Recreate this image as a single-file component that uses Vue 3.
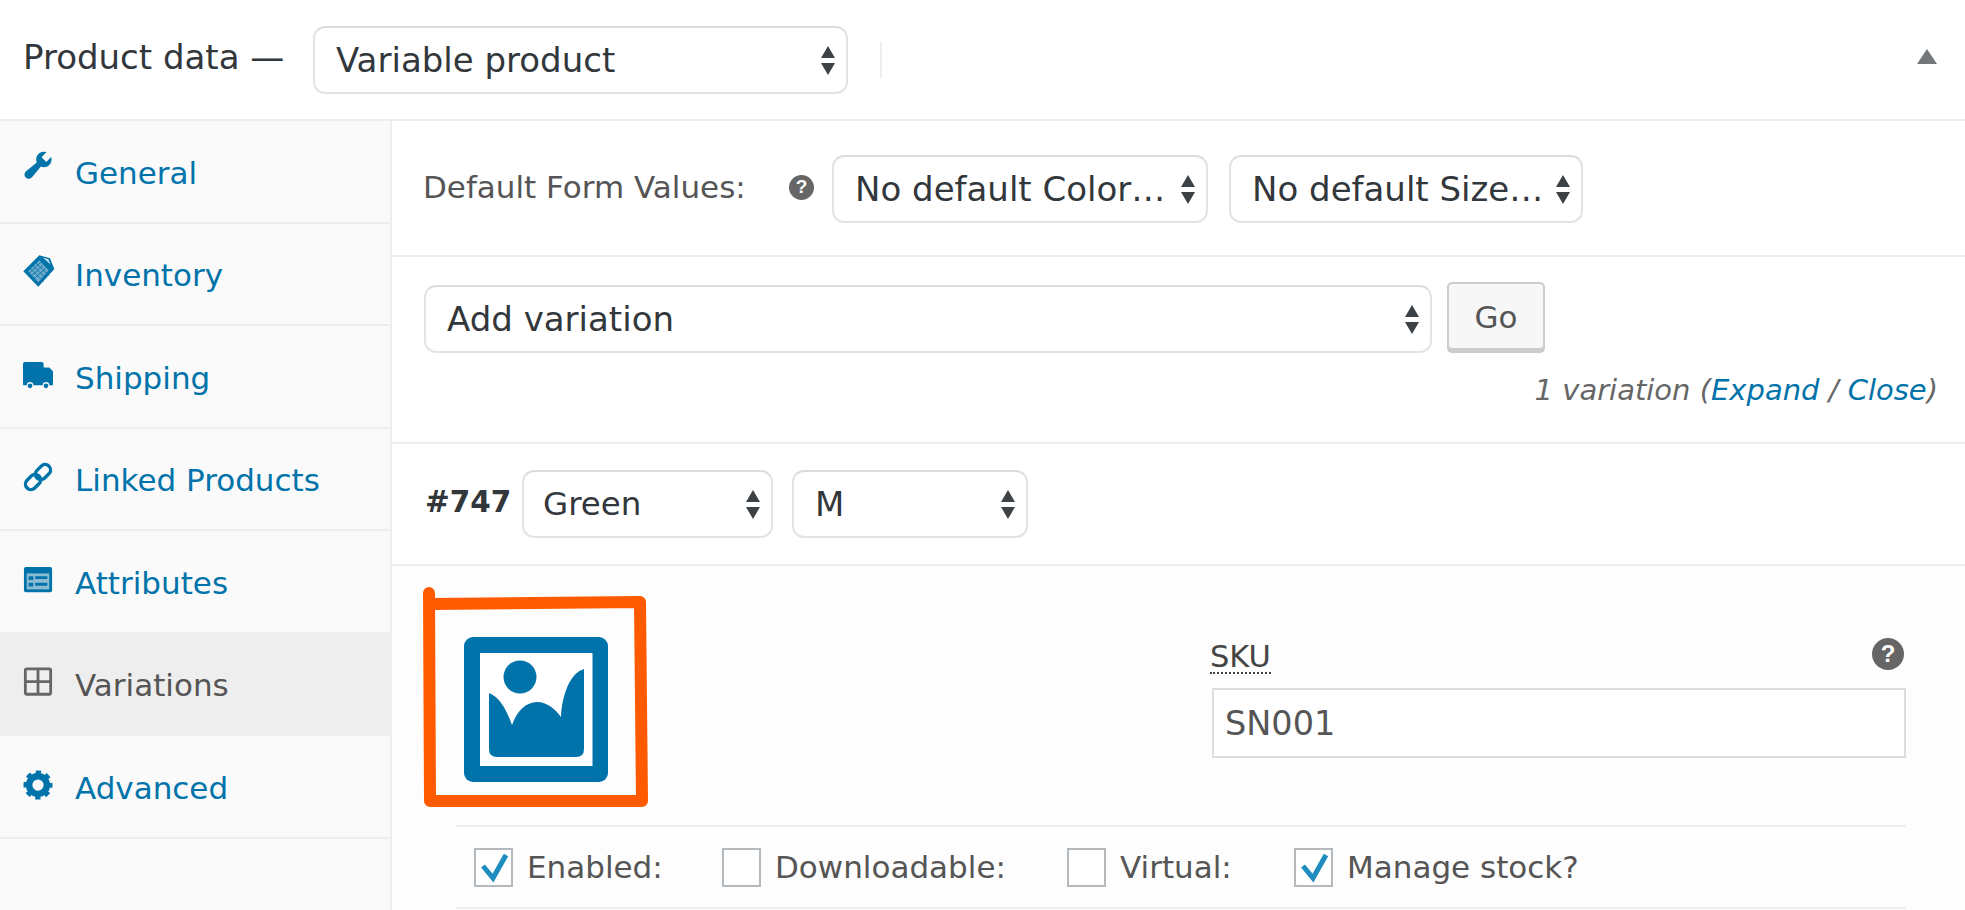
<script setup>
const tabs = [
  { label: 'General', icon: 'wrench' },
  { label: 'Inventory', icon: 'tag' },
  { label: 'Shipping', icon: 'truck' },
  { label: 'Linked Products', icon: 'link' },
  { label: 'Attributes', icon: 'attr' },
  { label: 'Variations', icon: 'grid', active: true },
  { label: 'Advanced', icon: 'gear' },
]
const flags = [
  { label: 'Enabled:', checked: true, cls: 'f1' },
  { label: 'Downloadable:', checked: false, cls: 'f2' },
  { label: 'Virtual:', checked: false, cls: 'f3' },
  { label: 'Manage stock?', checked: true, cls: 'f4' },
]
</script>

<template>
  <div class="page">
    <header class="head">
      <span class="title">Product data —</span>
      <div class="sel sel-type">
        <span class="sel-text">Variable product</span>
        <svg class="arrows" viewBox="0 0 14 29"><path d="M7 0L14 12H0zM7 29L0 17H14z" /></svg>
      </div>
      <span class="vsep"></span>
      <svg class="collapse" viewBox="0 0 20 15"><path d="M10 0L20 15H0z" /></svg>
    </header>

    <div class="main">
      <nav class="tabs">
        <div v-for="t in tabs" :key="t.label" class="tab" :class="{ active: t.active }">
          <svg class="ico" viewBox="0 0 32 32">
            <g v-if="t.icon === 'wrench'" transform="translate(-2 -7) scale(1.8)">
              <path d="M16.68 9.77c-1.34 1.34-3.3 1.67-4.95.99l-5.41 6.52c-.99.99-2.59.99-3.58 0s-.99-2.59 0-3.58l6.52-5.41c-.68-1.65-.35-3.61.99-4.95 1.28-1.28 3.12-1.62 4.72-1.06l-2.89 2.89 2.82 2.82 2.86-2.86c.56 1.6.22 3.44-1.08 4.68z" />
            </g>
            <g v-else-if="t.icon === 'tag'">
              <path d="M17.400-2.900L28.800.3 33.400 11.700 16.300 30.600.3 14z" />
              <path d="M17.400 2.500L27.500 13 16.300 26 5.500 14z" fill="#6aa9c9" />
              <path d="M8 11.500L22 25M11 8.500L25 22M14 5.500L28 19M22 7L8 20M25 10L11 23M19 4.500L6 17" stroke="#0073aa" stroke-width=".9" fill="none" />
              <path d="M21-.5L27 1.200 29.500 7z" fill="#cfe3ee" />
            </g>
            <g v-else-if="t.icon === 'truck'">
              <path d="M0 4a2 2 0 0 1 2-2H20a2 2 0 0 1 2 2V8H28L32 12V27H28a3.500 3.500 0 0 0-7 0H11a3.500 3.500 0 0 0-7 0H1a1 1 0 0 1-1-1z" />
              <circle cx="7.500" cy="27.500" r="2.500" />
              <circle cx="24.500" cy="27.500" r="2.500" />
            </g>
            <g v-else-if="t.icon === 'link'" fill="none" stroke="#0073aa" stroke-width="3.600" transform="rotate(-45 16 15)">
              <rect x="-.5" y="9.200" width="18" height="11.600" rx="5.800" />
              <rect x="14.500" y="9.200" width="18" height="11.600" rx="5.800" />
            </g>
            <g v-else-if="t.icon === 'attr'">
              <path d="M3 2H29a2 2 0 0 1 2 2V27a2 2 0 0 1-2 2H3a2 2 0 0 1-2-2V4a2 2 0 0 1 2-2z" />
              <path d="M4 9H28V26H4z" fill="#8cbcd5" />
              <path d="M6 12H11V16H6zM13 12H26V15H13zM6 19H11V23H6zM13 19H26V22H13z" />
            </g>
            <g v-else-if="t.icon === 'grid'" fill="none" stroke="#666" stroke-width="3" transform="translate(0 -1.500)">
              <rect x="2.500" y="2.500" width="27" height="27" rx="1.500" />
              <path d="M16 2.500V29.500M2.500 16H29.500" />
            </g>
            <g v-else fill="none" stroke="#0073aa">
              <circle cx="16" cy="16" r="9.500" stroke-width="7" />
              <circle cx="16" cy="16" r="13" stroke-width="5" stroke-dasharray="5.400 4.810" stroke-dashoffset="2.700" />
            </g>
          </svg>
          <span class="tab-label">{{ t.label }}</span>
        </div>
        <div class="tab-fill"></div>
      </nav>

      <section class="content">
        <div class="row r-defaults">
          <span class="def-label">Default Form Values:</span>
          <span class="help help-s">?</span>
          <div class="sel sel-color">
            <span class="sel-text">No default Color…</span>
            <svg class="arrows" viewBox="0 0 14 29"><path d="M7 0L14 12H0zM7 29L0 17H14z" /></svg>
          </div>
          <div class="sel sel-size">
            <span class="sel-text">No default Size…</span>
            <svg class="arrows" viewBox="0 0 14 29"><path d="M7 0L14 12H0zM7 29L0 17H14z" /></svg>
          </div>
        </div>

        <div class="row r-add">
          <div class="add-line">
            <div class="sel sel-add">
              <span class="sel-text">Add variation</span>
              <svg class="arrows" viewBox="0 0 14 29"><path d="M7 0L14 12H0zM7 29L0 17H14z" /></svg>
            </div>
            <button class="go" type="button">Go</button>
          </div>
          <div class="count">1 variation (<a>Expand</a> / <a>Close</a>)</div>
        </div>

        <div class="row r-var">
          <b class="vid">#747</b>
          <div class="sel sel-green">
            <span class="sel-text">Green</span>
            <svg class="arrows" viewBox="0 0 14 29"><path d="M7 0L14 12H0zM7 29L0 17H14z" /></svg>
          </div>
          <div class="sel sel-m">
            <span class="sel-text">M</span>
            <svg class="arrows" viewBox="0 0 14 29"><path d="M7 0L14 12H0zM7 29L0 17H14z" /></svg>
          </div>
        </div>

        <div class="body">
          <div class="upper">
            <svg class="thumb" viewBox="0 0 144 145">
              <rect width="144" height="145" rx="9" fill="#0073aa" />
              <rect x="16" y="16" width="112.500" height="113" fill="#fff" />
              <circle cx="56" cy="40" r="16.500" fill="#0073aa" />
              <path d="M25 56C36 60 43 74 48 88 53 74 62 65 73 65 83 65 91 72 97 80 98 58 106 36 120 32V112Q120 120 112 120H33Q25 120 25 112z" fill="#0073aa" />
            </svg>
            <div class="sku">
              <div class="sku-head">
                <span class="sku-label">SKU</span>
                <span class="help help-l">?</span>
              </div>
              <div class="sku-input">SN001</div>
            </div>
          </div>
          <div class="flags">
            <label v-for="f in flags" :key="f.label" class="flag" :class="f.cls">
              <span class="cb">
                <svg v-if="f.checked" viewBox="0 0 35 35"><path d="M7 16L17 28 30 5" fill="none" stroke="#1e8cbe" stroke-width="5" /></svg>
              </span>
              <span>{{ f.label }}</span>
            </label>
          </div>
          <svg class="mark" viewBox="0 0 240 230">
            <path d="M11 6L12 214 224 214 222 15 12 17" fill="none" stroke="#ff5a00" stroke-width="12" stroke-linecap="round" stroke-linejoin="round" />
          </svg>
        </div>
      </section>
    </div>
  </div>
</template>

<style>
html, body { margin: 0; background: #fff; }
</style>

<style scoped>
.page {
  width: 1965px;
  height: 910px;
  overflow: hidden;
  background: #fff;
  font-family: "DejaVu Sans", sans-serif;
  color: #444;
  font-size: 31px;
}
.head {
  height: 121px;
  box-sizing: border-box;
  display: flex;
  align-items: center;
  padding-left: 23px;
  border-bottom: 2px solid #eee;
  color: #32373c;
}
.title { width: 290px; flex: none; margin-bottom: 6px; font-size: 34px; white-space: nowrap; }
.sel {
  flex: none;
  box-sizing: border-box;
  height: 68px;
  border: 2px solid #e3e3e3;
  border-top-color: #dcdcdc;
  border-radius: 12px;
  background: #fff;
  display: flex;
  align-items: center;
  justify-content: space-between;
  padding: 0 11px 0 21px;
  color: #32373c;
  font-size: 34px;
}
.sel-text { white-space: nowrap; }
.arrows { width: 14px; height: 29px; fill: #3c4146; flex: none; }
.sel-type { width: 535px; margin-top: 1px; }
.vsep { width: 2px; height: 36px; background: #eee; margin-left: 32px; }
.collapse { width: 20px; height: 15px; fill: #72777c; margin-left: auto; margin-right: 28px; margin-bottom: 6px; }
.main { display: flex; height: 789px; }
.tabs { width: 390px; flex: none; background: #fafafa; display: flex; flex-direction: column; }
.tab {
  box-sizing: border-box;
  height: 102.5px;
  flex: none;
  display: flex;
  align-items: center;
  padding-left: 23px;
  padding-top: 3px;
  border-bottom: 2px solid #eee;
  color: #0073aa;
}
.tab.active { background: #eee; color: #555; border-bottom-color: #eee; }
.ico { width: 30px; height: 30px; fill: #0073aa; flex: none; margin-right: 22px; margin-top: -5px; overflow: visible; }
.tab-fill { flex: 1; }
.content { flex: 1; min-width: 0; border-left: 2px solid #eee; display: flex; flex-direction: column; }
.row { box-sizing: border-box; border-bottom: 2px solid #eee; flex: none; }
.r-defaults { height: 136px; display: flex; align-items: center; padding-left: 31px; padding-top: 2px; }
.def-label { width: 378px; flex: none; font-size: 31px; color: #555; margin-bottom: 4px; white-space: nowrap; }
.help {
  display: inline-flex;
  align-items: center;
  justify-content: center;
  border-radius: 50%;
  background: #666;
  color: #fff;
  font-family: "Liberation Sans", sans-serif;
  font-weight: 700;
  flex: none;
}
.help-s { width: 25px; height: 25px; font-size: 19px; margin-left: -12px; margin-bottom: 4px; }
.sel-color { width: 376px; margin-left: 18px; }
.sel-size { width: 354px; margin-left: 21px; }
.r-add { height: 187px; padding: 25px 20px 0 32px; }
.add-line { display: flex; align-items: flex-end; height: 71px; }
.sel-add { width: 1008px; }
.go {
  width: 98px;
  height: 68px;
  margin: 0 0 3px 15px;
  padding: 2px 0 0;
  box-sizing: border-box;
  border: 2px solid #ccc;
  border-radius: 5px;
  background: #f7f7f7;
  box-shadow: 0 3px 0 #ccc;
  font: inherit;
  font-size: 31px;
  color: #555;
}
.count { text-align: right; font-style: italic; font-size: 29px; color: #666; margin-top: 20px; padding-right: 7px; white-space: nowrap; }
.count a { color: #0073aa; }
.r-var { height: 122px; display: flex; align-items: center; padding-left: 33px; }
.vid { width: 97px; flex: none; color: #32373c; font-size: 29.5px; margin-bottom: 4px; }
.sel-green { width: 251px; }
.sel-green .sel-text { font-size: 32.5px; margin-left: -2px; }
.sel-m { width: 236px; margin-left: 19px; }
.body { position: relative; flex: 1; background: #fdfdfd; }
.upper { height: 259px; box-sizing: border-box; display: flex; justify-content: space-between; padding: 71px 59px 0 72px; }
.thumb { width: 144px; height: 145px; flex: none; }
.sku { width: 694px; margin-top: -36px; }
.sku-head { display: flex; justify-content: space-between; align-items: flex-start; height: 87px; box-sizing: border-box; padding-right: 2px; }
.sku-label {
  font-size: 30.5px;
  line-height: 30px;
  margin-top: 41px;
  margin-left: -2px;
  border-bottom: 2px dotted #444;
  color: #444;
}
.help-l { width: 32px; height: 32px; font-size: 24px; margin-top: 37px; }
.sku-input {
  box-sizing: border-box;
  height: 70px;
  border: 2px solid #ddd;
  background: #fff;
  display: flex;
  align-items: center;
  padding-left: 11px;
  color: #555;
  font-size: 33.5px;
}
.flags {
  height: 84px;
  box-sizing: border-box;
  margin: 0 59px 0 64px;
  border-top: 2px solid #eee;
  border-bottom: 2px solid #eee;
  display: flex;
  align-items: center;
  font-size: 31px;
  color: #555;
}
.flag { display: flex; align-items: center; flex: none; gap: 14px; }
.cb { width: 39px; height: 39px; box-sizing: border-box; border: 2px solid #b4b9be; background: #fff; display: block; }
.cb svg { display: block; width: 35px; height: 35px; }
.f1 { margin-left: 18px; width: 248px; }
.f2 { width: 345px; }
.f3 { width: 227px; }
.mark { position: absolute; left: 26px; top: 21px; width: 240px; height: 230px; }
</style>
